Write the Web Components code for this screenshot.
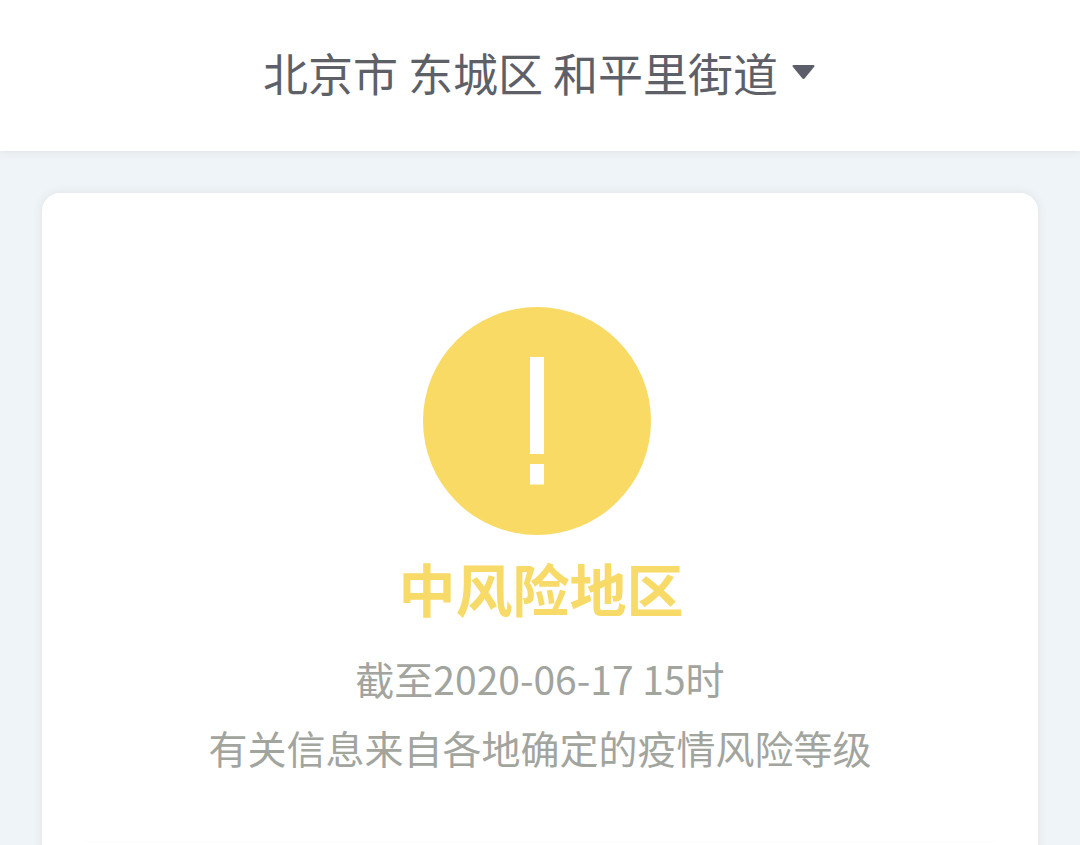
<!DOCTYPE html>
<html lang="zh-CN">
<head>
<meta charset="utf-8">
<title>风险等级</title>
<style>
body {
    margin: 0;
    overflow: hidden;
    background: #eff4f8;
    font-family: "Noto Sans CJK SC", sans-serif;
}
</style>
</head>
<body>
<risk-page>
    <region-bar slot="header">北京市 东城区 和平里街道</region-bar>
    <risk-card>
        <warning-icon slot="icon"></warning-icon>
        <span slot="level">中风险地区</span>
        <span slot="time">截至2020-06-17 15时</span>
        <span slot="source">有关信息来自各地确定的疫情风险等级</span>
    </risk-card>
</risk-page>
<script>
class RiskPage extends HTMLElement {
    constructor () {
        super();
        this.attachShadow({mode: "open"});
        this.shadowRoot.innerHTML = `<style>
:host {
    display: flex;
    flex-direction: column;
    height: 845px;
    overflow: hidden;
}

main {
    flex: 1;
    min-height: 0;
    padding: 42px 42px 0;
}
</style>
<slot name="header"></slot>
<main><slot></slot></main>`;
    }
}

class RegionBar extends HTMLElement {
    constructor () {
        super();
        this.attachShadow({mode: "open"});
        this.shadowRoot.innerHTML = `<style>
:host {
    display: flex;
    flex-shrink: 0;
    justify-content: center;
    align-items: center;
    gap: 14px;
    height: 151px;
    padding: 0 2px 6px 0;
    box-sizing: border-box;
    background: #fff;
    box-shadow: 0 1px 9px rgba(90, 70, 40, 0.1);
    color: #5e6068;
    font-size: 45px;
    line-height: 66px;
    white-space: nowrap;
}

svg {
    display: block;
    width: 23px;
    height: 14px;
    margin-bottom: 1px;
}
</style>
<span><slot></slot></span>
<svg viewBox="0 0 23 14"><path d="M2 0h19q2.500 0 1 2l-9 11q-1.500 1.800-3 0l-9-11q-1.500-2 1-2z" fill="#5c5f6b"/></svg>`;
    }
}

class WarningIcon extends HTMLElement {
    constructor () {
        super();
        this.attachShadow({mode: "open"});
        this.shadowRoot.innerHTML = `<style>
:host {
    display: block;
    width: 228px;
    height: 228px;
}

svg {
    display: block;
}
</style>
<svg width="228" height="228" viewBox="0 0 228 228">
    <circle cx="114" cy="114" r="114" fill="#f8da65"/>
    <path d="M107 50h14v97h-14zM107 157h14v20.500h-14z" fill="#fff"/>
</svg>`;
    }
}

class RiskCard extends HTMLElement {
    constructor () {
        super();
        this.attachShadow({mode: "open"});
        this.shadowRoot.innerHTML = `<style>
:host {
    display: flex;
    flex-direction: column;
    align-items: center;
    box-sizing: border-box;
    height: 720px;
    padding-top: 114px;
    background: #fff;
    border-radius: 18px;
    box-shadow: 0 0 10px rgba(90, 70, 40, 0.1);
    white-space: nowrap;
}

.icon {
    margin-right: 6px;
}

.level {
    margin: 10px 0 0 2px;
    color: #f8da68;
    font-size: 57px;
    font-weight: 700;
    line-height: 84px;
}

.info {
    color: #a2a49e;
    font-size: 39px;
    line-height: 69px;
}

.time {
    margin-top: 15px;
}

hr {
    width: 912px;
    height: 1px;
    margin: 59px 0 0;
    border: 0;
    background: #fcfdfd;
}
</style>
<div class="icon"><slot name="icon"></slot></div>
<div class="level"><slot name="level"></slot></div>
<div class="info time"><slot name="time"></slot></div>
<div class="info"><slot name="source"></slot></div>
<hr>`;
    }
}

customElements.define("risk-page", RiskPage);
customElements.define("region-bar", RegionBar);
customElements.define("warning-icon", WarningIcon);
customElements.define("risk-card", RiskCard);
</script>
</body>
</html>
